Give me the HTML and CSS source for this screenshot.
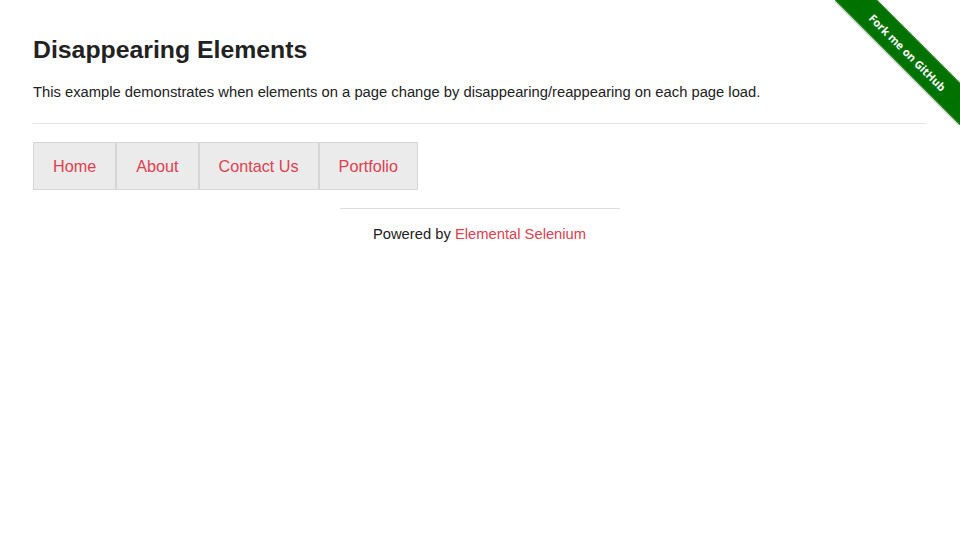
FILE: index.html
```html
<!DOCTYPE html>
<html>
<head>
<meta charset="utf-8">
<link rel="stylesheet" href="styles.css">
</head>
<body>
<div class="ribbon"><div class="band"><span>Fork me on GitHub</span></div></div>
<div class="page">
  <div class="example">
    <h3 class="title">Disappearing Elements</h3>
    <p class="lead">This example demonstrates when elements on a page change by disappearing/reappearing on each page load.</p>
    <hr class="rule">
    <ul class="menu">
      <li class="item"><a href="#">Home</a></li>
      <li class="item"><a href="#">About</a></li>
      <li class="item"><a href="#">Contact Us</a></li>
      <li class="item"><a href="#">Portfolio</a></li>
    </ul>
  </div>
  <footer class="footer">
    <hr class="footer-rule">
    <div class="powered">Powered by <a href="#">Elemental Selenium</a></div>
  </footer>
</div>
</body>
</html>
```
FILE: styles.css
```css
html, body {
  margin: 0;
  padding: 0;
  background: #fff;
}
body {
  font-family: "Liberation Sans", Arial, sans-serif;
  color: #222;
  font-size: 14.75px;
}
a {
  color: #e0404e;
  text-decoration: none;
}
.page {
  padding: 0 34px 0 33px;
}
.example {
  display: flex;
  flex-direction: column;
  align-items: flex-start;
}
.title {
  margin: 35px 0 0;
  font-size: 24.8px;
  font-weight: bold;
  line-height: 30px;
}
.lead {
  margin: 17px 0 0;
  line-height: 20px;
}
.rule {
  align-self: stretch;
  border: 0;
  border-top: 1px solid #e4e4e4;
  margin: 21px 0 0;
  height: 0;
}
.menu {
  display: flex;
  list-style: none;
  margin: 18px 0 0;
  padding: 0;
}
.item {
  background: #ebebeb;
  border: 1px solid #d6d6d6;
}
.item a {
  display: block;
  padding: 0 19px;
  font-size: 16.2px;
  line-height: 46px;
}
.footer {
  display: flex;
  flex-direction: column;
  align-items: center;
}
.footer-rule {
  width: 280px;
  border: 0;
  border-top: 1px solid #ddd;
  margin: 18px 0 0;
  height: 0;
}
.powered {
  margin-top: 16px;
  line-height: 18px;
}
.ribbon {
  position: absolute;
  top: 0;
  right: 0;
  width: 125px;
  height: 125px;
  overflow: hidden;
}
.band {
  position: absolute;
  left: -27px;
  top: 36.5px;
  width: 200px;
  height: 30px;
  box-sizing: border-box;
  background: #007200;
  border-top: 1px solid #2a8a2a;
  border-bottom: 1px solid #2a8a2a;
  transform: rotate(45deg);
  display: flex;
  align-items: center;
  justify-content: center;
  box-shadow: 0 1px 2px rgba(0,0,0,0.25);
}
.band span {
  color: #fff;
  font-family: "Open Sans", "DejaVu Sans", sans-serif;
  font-weight: bold;
  font-size: 11px;
}
```
